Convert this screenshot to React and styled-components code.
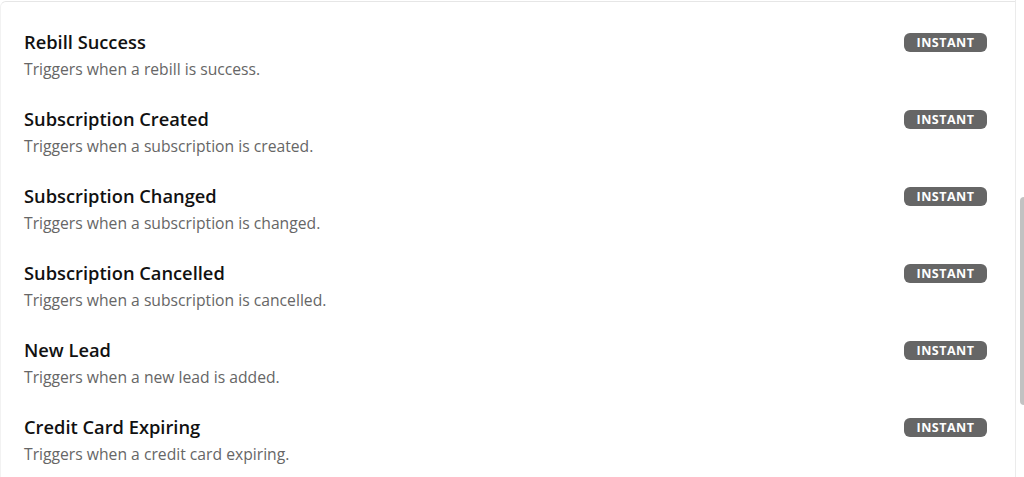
import React from 'react'
import styled, { createGlobalStyle } from 'styled-components'

const GlobalStyle = createGlobalStyle`
  html, body {
    margin: 0;
    padding: 0;
    background: #fff;
    font-family: "Open Sans", "Liberation Sans", sans-serif;
    overflow: hidden;
  }
`

const Page = styled.div`
  display: flex;
  height: 477px;
`

const Main = styled.div`
  flex: 1;
  padding-top: 1px;
  overflow: hidden;
`

const Card = styled.div`
  height: 100%;
  border-top: 1px solid #e6e6e6;
  border-left: 1px solid #f2f2f2;
  border-top-left-radius: 6px;
  padding: 13px 28px 0 23px;
  box-sizing: border-box;
`

const Row = styled.div`
  display: flex;
  align-items: flex-start;
  justify-content: space-between;
  padding: 15px 0 12px;
`

const Info = styled.div`
  display: flex;
  flex-direction: column;
  gap: 4px;
`

const Title = styled.div`
  font-size: 18.3px;
  line-height: 24px;
  font-weight: 600;
  color: #111;
`

const Desc = styled.div`
  font-size: 15.7px;
  line-height: 22px;
  color: #666;
`

const Badge = styled.span`
  margin-top: 3px;
  width: 83px;
  height: 19px;
  box-sizing: border-box;
  border-radius: 6px;
  background: #666;
  color: #fff;
  font-size: 12.5px;
  font-weight: 700;
  line-height: 19px;
  text-align: center;
  letter-spacing: 0.5px;
`

const Track = styled.div`
  width: 9px;
  border-left: 1px solid #ebebeb;
  padding: 197px 0 0 4px;
  box-sizing: border-box;
`

const Thumb = styled.div`
  width: 6px;
  height: 208px;
  border-radius: 4px 0 0 4px;
  background: #c2c2c2;
`

const triggers = [
  ['Rebill Success', 'Triggers when a rebill is success.'],
  ['Subscription Created', 'Triggers when a subscription is created.'],
  ['Subscription Changed', 'Triggers when a subscription is changed.'],
  ['Subscription Cancelled', 'Triggers when a subscription is cancelled.'],
  ['New Lead', 'Triggers when a new lead is added.'],
  ['Credit Card Expiring', 'Triggers when a credit card expiring.'],
]

const App = () => {
  return (
    <Page>
      <GlobalStyle />
      <Main>
        <Card>
          {triggers.map(([title, desc]) => (
            <Row key={title}>
              <Info>
                <Title>{title}</Title>
                <Desc>{desc}</Desc>
              </Info>
              <Badge>INSTANT</Badge>
            </Row>
          ))}
        </Card>
      </Main>
      <Track>
        <Thumb />
      </Track>
    </Page>
  )
}

export default App
